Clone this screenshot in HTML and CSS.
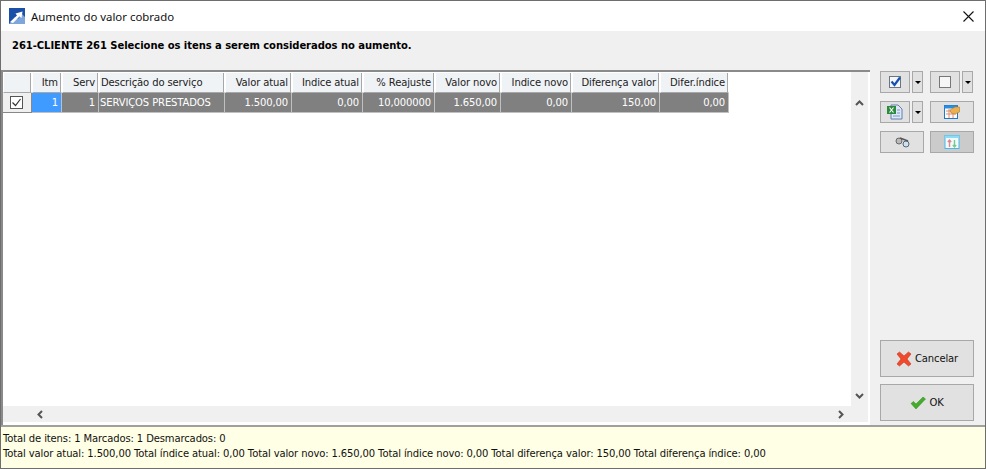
FILE: index.html
```html
<!DOCTYPE html>
<html lang="pt">
<head>
<meta charset="utf-8">
<title>Aumento do valor cobrado</title>
<link rel="stylesheet" href="styles.css">
</head>
<body>
<div class="window">
  <header class="titlebar">
    <svg class="appicon" width="16" height="16" viewBox="0 0 16 16"><rect width="16" height="16" fill="#1c4fa8"/><path d="M0 16 L6 9 L9 11 L13 6 L16 9 V16 Z" fill="#7fa6dc"/><path d="M1 14 L8 7.5 L6.5 5.5 L13.5 3.5 L12.5 10 L10.5 8.5 L4 15 Z" fill="#fff"/></svg>
    <span class="titletext">Aumento do valor cobrado</span>
    <svg class="close" width="11" height="11" viewBox="0 0 11 11"><path d="M0.5 0.5 L10.5 10.5 M10.5 0.5 L0.5 10.5" stroke="#111" stroke-width="1.1"/></svg>
  </header>
  <div class="subtitle">261-CLIENTE 261 Selecione os itens a serem considerados no aumento.</div>
  <div class="main">
    <section class="gridpanel">
      <div class="gridarea">
        <div class="gridcontent">
          <div class="row head">
            <div class="c w0"></div><div class="c w1">Itm</div><div class="c w2">Serv</div><div class="c w3 left">Descrição do serviço</div><div class="c w4">Valor atual</div><div class="c w5">Indice atual</div><div class="c w6">% Reajuste</div><div class="c w7">Valor novo</div><div class="c w8">Indice novo</div><div class="c w9">Diferença valor</div><div class="c w10">Difer.índice</div>
          </div>
          <div class="row data">
            <div class="c w0 chk"><svg width="13" height="13" viewBox="0 0 13 13"><rect x=".5" y=".5" width="12" height="12" fill="#fff" stroke="#555"/><path d="M2.5 6.5 L5.5 9.5 L10.5 3" fill="none" stroke="#333" stroke-width="1.2"/></svg></div><div class="c w1 sel">1</div><div class="c w2">1</div><div class="c w3 left">SERVIÇOS PRESTADOS</div><div class="c w4">1.500,00</div><div class="c w5">0,00</div><div class="c w6">10,000000</div><div class="c w7">1.650,00</div><div class="c w8">0,00</div><div class="c w9">150,00</div><div class="c w10">0,00</div>
          </div>
        </div>
        <div class="vscroll">
          <svg width="9" height="6" viewBox="0 0 9 6"><path d="M1 5 L4.5 1.5 L8 5" fill="none" stroke="#555" stroke-width="2"/></svg>
          <svg width="9" height="6" viewBox="0 0 9 6"><path d="M1 1 L4.5 4.5 L8 1" fill="none" stroke="#555" stroke-width="2"/></svg>
        </div>
      </div>
      <div class="hscroll">
        <svg width="6" height="9" viewBox="0 0 6 9"><path d="M5 1 L1.5 4.5 L5 8" fill="none" stroke="#555" stroke-width="2"/></svg>
        <svg width="6" height="9" viewBox="0 0 6 9"><path d="M1 1 L4.5 4.5 L1 8" fill="none" stroke="#555" stroke-width="2"/></svg>
      </div>
    </section>
    <aside class="side">
      <div class="tools">
        <div class="toolrow">
          <div class="split">
            <button class="btn small"><svg width="14" height="14" viewBox="0 0 14 14"><rect x=".5" y=".5" width="11" height="11" transform="translate(1 1)" fill="#f4f6fa" stroke="#6c7484"/><path d="M3.5 6.5 L6.5 10 L12 2.5" fill="none" stroke="#1450b4" stroke-width="2.2"/></svg></button>
            <button class="btn arrow"><span class="caret"></span></button>
          </div>
          <div class="split">
            <button class="btn small"><svg width="14" height="14" viewBox="0 0 14 14"><rect x="1.5" y="1.5" width="11" height="11" fill="#f6f6f6" stroke="#777"/></svg></button>
            <button class="btn arrow"><span class="caret"></span></button>
          </div>
        </div>
        <div class="toolrow">
          <div class="split">
            <button class="btn small"><svg width="16" height="16" viewBox="0 0 16 16"><path d="M4 1 H11 L15 5 V15 H4 Z" fill="#dfe8f6" stroke="#5f7fb0"/><path d="M10 6 H13 M10 9 H13 M6 12 H13" stroke="#7a9ac8"/><rect x="0" y="2" width="9" height="8" fill="#2c8a3c"/><path d="M2.5 3.5 L6.5 8.5 M6.5 3.5 L2.5 8.5" stroke="#fff" stroke-width="1.2"/></svg></button>
            <button class="btn arrow"><span class="caret"></span></button>
          </div>
          <button class="btn wide"><svg width="16" height="16" viewBox="0 0 16 16"><rect x="0.5" y="1.5" width="13" height="13" fill="#fff" stroke="#1f78c8"/><rect x="0.5" y="1.5" width="13" height="3" fill="#2a8ee0"/><path d="M2 7 H12 M2 10 H12 M5 5 V14 M9 5 V14" stroke="#e08a70"/><path d="M6 6 L11 3 H15.5 V8 L11 10 L7 9 Z" fill="#eeb04a" stroke="#a87020" stroke-width=".5"/></svg></button>
        </div>
        <div class="toolrow">
          <button class="btn wide"><svg width="15" height="11" viewBox="0 0 15 11"><circle cx="4" cy="4" r="3" fill="#bbb" stroke="#666"/><circle cx="11" cy="7" r="3" fill="#cfe0f2" stroke="#567"/><path d="M5 1 L13 4" stroke="#555" stroke-width="1.4"/></svg></button>
          <button class="btn wide pressed"><svg width="16" height="16" viewBox="0 0 16 16"><rect x="1" y="1.5" width="14" height="13" fill="#f1fafe" stroke="#48b8e8"/><rect x="1" y="1.5" width="14" height="2.5" fill="#8adcf8"/><path d="M5.5 13 V6 M3.8 8 L5.5 6 L7.2 8" fill="none" stroke="#d88" stroke-width="1.4"/><path d="M10.5 6 V13 M8.8 11 L10.5 13 L12.2 11" fill="none" stroke="#7c8" stroke-width="1.4"/></svg></button>
        </div>
      </div>
      <div class="actions">
        <button class="btn action"><svg width="16" height="16" viewBox="0 0 16 16"><path d="M1 3 L3.5 1 L8 5 L12.5 1 L15 3 L11 8 L15 13 L12.5 15 L8 11 L3.5 15 L1 13 L5 8 Z" fill="#f0492c" stroke="#c8341c" stroke-width=".6"/></svg><span>Cancelar</span></button>
        <button class="btn action"><svg width="16" height="14" viewBox="0 0 16 14"><path d="M1 7.5 L3.5 5.5 L6 8 L13 1 L15.5 3 L6 13 Z" fill="#45ad2b" stroke="#2f8a1c" stroke-width=".5"/></svg><span>OK</span></button>
      </div>
    </aside>
  </div>
  <footer class="footer">
    <div>Total de itens: 1 Marcados: 1 Desmarcados: 0</div>
    <div>Total valor atual: 1.500,00 Total índice atual: 0,00 Total valor novo: 1.650,00 Total índice novo: 0,00 Total diferença valor: 150,00 Total diferença índice: 0,00</div>
  </footer>
</div>
</body>
</html>
```
FILE: styles.css
```css
* { box-sizing: border-box; }
html, body { margin: 0; padding: 0; height: 100%; }
body { overflow: hidden; font-family: "DejaVu Sans", sans-serif; font-size: 10px; letter-spacing: -0.12px; color: #111; }
.window { width: 986px; height: 469px; display: flex; flex-direction: column; border: 1px solid #6e6e6e; background: #f0f0f0; }
.titlebar { height: 30px; flex: none; background: #fff; display: flex; align-items: center; padding: 0 11px 0 8px; }
.appicon { flex: none; margin-right: 6px; }
.titletext { flex: 1; font-family: "Noto Sans", sans-serif; font-size: 11.4px; letter-spacing: 0; color: #111; }
.subtitle { height: 39px; flex: none; padding: 9px 0 0 11px; font-weight: bold; font-size: 10px; letter-spacing: -0.05px; color: #000; }
.main { flex: 1; display: flex; min-height: 0; }
.gridpanel { width: 869px; flex: none; display: flex; flex-direction: column; border-top: 2px solid #8a8a8a; border-left: 2px solid #8a8a8a; background: #fff; padding-right: 2px; }
.gridarea { flex: 1; display: flex; min-height: 0; }
.gridcontent { flex: 1; min-width: 0; }
.row { display: flex; }
.row.head { height: 21px; }
.row.data { height: 20px; }
.c { flex: none; display: flex; align-items: center; justify-content: flex-end; white-space: nowrap; overflow: hidden; padding-right: 3px; }
.head .c { background: #f0f3f6; color: #222; border-right: 1px solid #fff; border-left: 1px solid #fff; border-top: 1px solid #fff; border-bottom: 1px solid #a8a8a8; box-shadow: inset -1px 0 0 #a8a8a8; }
.data .c { background: #808080; color: #fff; border-right: 1px solid #c0c0c0; border-bottom: 1px solid #c0c0c0; }
.c.left { justify-content: flex-start; padding-left: 1px; }
.data .chk { background: #f0f0f0; justify-content: flex-start; padding: 0 0 0 7px; border-right: 1px solid #888; border-bottom: 1px solid #888; }
.data .sel { background: #3f9bff; }
.w0 { width: 29px; }
.w1 { width: 30px; }
.w2 { width: 37px; }
.w3 { width: 126px; }
.w4 { width: 67px; }
.w5 { width: 71px; }
.w6 { width: 72px; }
.w7 { width: 66px; }
.w8 { width: 71px; }
.w9 { width: 88px; }
.w10 { width: 69px; }
.vscroll { width: 17px; flex: none; background: #f0f0f0; display: flex; flex-direction: column; justify-content: space-between; align-items: center; padding: 28px 0 7px; }
.hscroll { height: 16px; flex: none; background: #f0f0f0; margin-bottom: 3px; display: flex; justify-content: space-between; align-items: center; padding: 0 24px 0 34px; }
.side { flex: 1; display: flex; flex-direction: column; justify-content: space-between; padding: 1px 11px 4px 10px; }
.tools { display: flex; flex-direction: column; gap: 8px; }
.toolrow { display: flex; justify-content: space-between; }
.split { display: flex; gap: 2px; width: 44px; }
.btn { border: 1px solid #a8a8a8; background: #e1e1e1; padding: 0; display: flex; align-items: center; justify-content: center; font: inherit; color: #111; letter-spacing: inherit; }
.small { width: 30px; height: 22px; }
.arrow { width: 11px; height: 22px; }
.wide { width: 44px; height: 22px; }
.pressed { background: #cbcbcb; }
.caret { width: 0; height: 0; border-left: 3px solid transparent; border-right: 3px solid transparent; border-top: 3px solid #000; }
.actions { display: flex; flex-direction: column; gap: 7px; }
.action { width: 94px; height: 37px; gap: 3px; }
.footer { height: 43px; flex: none; background: #ffffe5; border-top: 2px solid #a0a0a0; padding: 4px 0 0 2px; line-height: 15px; color: #111; }
```
